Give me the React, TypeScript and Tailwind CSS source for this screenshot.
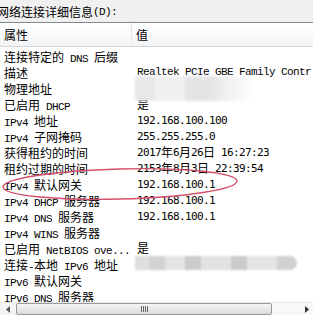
import React from "react";

const CJK = /([\u3000-\u303f\u4e00-\u9fff\uff00-\uffef]+)/;

function Mixed({ text, sans }: { text: string; sans?: boolean }) {
  const parts = text.split(CJK).filter((p) => p.length > 0);
  return (
    <>
      {parts.map((p, i) =>
        CJK.test(p) ? (
          <span key={i} className="font-['Noto_Sans_CJK_SC',sans-serif] text-[12px]">
            {p}
          </span>
        ) : sans ? (
          <span
            key={i}
            className="font-['DejaVu_Sans_Mono',monospace] text-[11px] tracking-[-0.62px] whitespace-pre"
          >
            {p}
          </span>
        ) : (
          <span
            key={i}
            className="font-['Liberation_Mono',monospace] text-[11px] tracking-[-0.6px] whitespace-pre"
          >
            {p}
          </span>
        )
      )}
    </>
  );
}

type Row = { k: string; v?: string; vSans?: boolean };

const rows: Row[] = [
  { k: "连接特定的 DNS 后缀" },
  { k: "描述", v: "Realtek PCIe GBE Family Contr" },
  { k: "物理地址" },
  { k: "已启用 DHCP", v: "是" },
  { k: "IPv4 地址", v: "192.168.100.100", vSans: true },
  { k: "IPv4 子网掩码", v: "255.255.255.0", vSans: true },
  { k: "获得租约的时间", v: "2017年6月26日 16:27:23", vSans: true },
  { k: "租约过期的时间", v: "2153年8月3日 22:39:54", vSans: true },
  { k: "IPv4 默认网关", v: "192.168.100.1", vSans: true },
  { k: "IPv4 DHCP 服务器", v: "192.168.100.1", vSans: true },
  { k: "IPv4 DNS 服务器", v: "192.168.100.1", vSans: true },
  { k: "IPv4 WINS 服务器" },
  { k: "已启用 NetBIOS ove...", v: "是" },
  { k: "连接-本地 IPv6 地址" },
  { k: "IPv6 默认网关" },
  { k: "IPv6 DNS 服务器" },
];

export default function App() {
  return (
    <div className="relative w-[313px] h-[315px] overflow-hidden bg-[#f0f0f0] text-[#000]">
      {/* label */}
      <div className="h-[22px] flex items-center pt-[2px] -ml-[3px] whitespace-nowrap leading-none">
        <Mixed text="网络连接详细信息(D):" />
      </div>

      {/* list box */}
      <div className="border-t border-[#828790] bg-white h-[293px] flex flex-col">
        {/* header */}
        <div className="h-[24px] flex border-b border-[#d5d5d5] bg-gradient-to-b from-white to-[#f3f4f6] leading-none shrink-0">
          <div className="w-[132px] flex items-center pl-[4px] border-r border-[#e3e5e8]">
            <Mixed text="属性" />
          </div>
          <div className="flex-1 flex items-center pl-[4px]">
            <Mixed text="值" />
          </div>
        </div>

        {/* rows */}
        <div className="flex-1 pt-[1px] overflow-hidden">
          {rows.map((r, i) => (
            <div key={i} className="h-[16px] flex items-center leading-none whitespace-nowrap">
              <div className="w-[137px] pl-[4px] shrink-0 overflow-hidden">
                <Mixed text={r.k} />
              </div>
              <div className="flex-1 h-full flex items-center">
                {r.v && <Mixed text={r.v} sans={r.vSans} />}
              </div>
            </div>
          ))}
        </div>
      </div>

      {/* blurred MAC */}
      <div className="absolute left-[135px] top-[76px] w-[118px] h-[25px] flex blur-[1.5px]">
        <div className="w-[20px] h-full bg-[#e8e8e8]" />
        <div className="w-[30px] h-full bg-[#f0f0f0]" />
        <div className="w-[30px] h-full bg-[#e4e4e4]" />
        <div className="w-[38px] h-full bg-gradient-to-r from-[#e9e9e9] to-white" />
      </div>

      {/* blurred IPv6 */}
      <div className="absolute left-[135px] top-[256px] w-[162px] h-[14px] flex rounded-r-[7px] overflow-hidden blur-[1px]">
        <div className="w-[14px] h-full bg-[#dedede]" />
        <div className="w-[16px] h-full bg-[#d2d2d2]" />
        <div className="w-[20px] h-full bg-[#e4e4e4]" />
        <div className="w-[16px] h-full bg-[#cccccc]" />
        <div className="w-[30px] h-full bg-[#e2e2e2]" />
        <div className="w-[16px] h-full bg-[#cbcbcb]" />
        <div className="w-[30px] h-full bg-[#e4e4e4]" />
        <div className="w-[20px] h-full bg-[#d0d0d0]" />
      </div>

      {/* red ellipse */}
      <svg className="absolute left-0 top-0 pointer-events-none" width="313" height="315">
        <ellipse
          cx="120"
          cy="184"
          rx="117"
          ry="15"
          fill="none"
          stroke="#d4506a"
          strokeWidth="1.4"
          transform="rotate(-1.5 120 184)"
        />
      </svg>

      {/* scrollbar */}
      <div className="absolute left-0 bottom-0 w-[313px] h-[13px] flex bg-[#f4f4f4] border-t border-[#e8e8e8]">
        <div className="w-[16px] h-full flex items-center justify-center">
          <svg width="4" height="7" viewBox="0 0 4 7">
            <path d="M4 0 L0 3.5 L4 7 Z" fill="#555" />
          </svg>
        </div>
        <div className="w-[256px] h-full border border-[#9a9a9a] rounded-[2px] bg-gradient-to-b from-[#f6f6f6] to-[#dcdcdc] flex items-center justify-center">
          <div className="flex gap-[1px]">
            <div className="w-[1px] h-[6px] bg-[#666]" />
            <div className="w-[1px] h-[6px] bg-[#666]" />
            <div className="w-[1px] h-[6px] bg-[#666]" />
            <div className="w-[1px] h-[6px] bg-[#666]" />
          </div>
        </div>
        <div className="flex-1 h-full flex items-center justify-end pr-[4px] bg-[#f8f8f8]">
          <svg width="4" height="7" viewBox="0 0 4 7">
            <path d="M0 0 L4 3.5 L0 7 Z" fill="#333" />
          </svg>
        </div>
      </div>
    </div>
  );
}
